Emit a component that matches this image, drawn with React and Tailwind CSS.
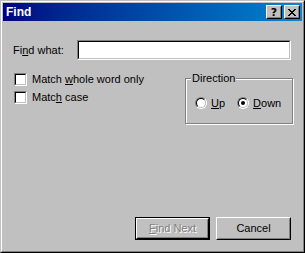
import React from "react";

function Sunken({ className = "", children }) {
  return (
    <div className={"border border-t-[#808080] border-l-[#808080] border-r-white border-b-white " + className}>
      <div className="w-full h-full border border-t-black border-l-black border-r-[#c0c0c0] border-b-[#c0c0c0] bg-white">
        {children}
      </div>
    </div>
  );
}

function Checkbox({ children }) {
  return (
    <div className="flex items-center h-[13px]">
      <Sunken className="w-[13px] h-[13px] ml-px shrink-0" />
      <span className="ml-[5px] leading-[13px]">{children}</span>
    </div>
  );
}

function Radio({ checked, children }) {
  return (
    <div className="flex items-center h-[12px]">
      <div className="w-[12px] h-[12px] rounded-full border border-t-[#808080] border-l-[#808080] border-r-white border-b-white shrink-0">
        <div className="w-full h-full rounded-full border border-t-black border-l-black border-r-[#c0c0c0] border-b-[#c0c0c0] bg-white flex items-center justify-center">
          {checked && <div className="w-[4px] h-[4px] rounded-full bg-black" />}
        </div>
      </div>
      <span className="ml-[4px] leading-[12px]">{children}</span>
    </div>
  );
}

function TitleButton({ children }) {
  return (
    <div className="w-[16px] h-[14px] border border-t-white border-l-white border-r-black border-b-black bg-[#c0c0c0]">
      <div className="w-full h-full border border-t-[#c0c0c0] border-l-[#c0c0c0] border-r-[#808080] border-b-[#808080] flex items-center justify-center">
        {children}
      </div>
    </div>
  );
}

export default function App() {
  return (
    <div className="w-[305px] h-[253px] bg-[#c0c0c0] border border-t-[#c0c0c0] border-l-[#c0c0c0] border-r-black border-b-black font-['Liberation_Sans',Arial,sans-serif] text-[11px] text-black select-none">
      <div className="w-full h-full border border-t-white border-l-white border-r-[#808080] border-b-[#808080] p-px flex flex-col">
        {/* Title bar */}
        <div className="h-[18px] bg-linear-to-r from-[#000080] to-[#1084d0] flex items-center pl-[3px] pr-[2px] shrink-0">
          <span className="text-white font-bold text-[12px] leading-none">Find</span>
          <div className="ml-auto flex gap-[2px]">
            <TitleButton>
              <span className="font-bold text-[11px] leading-none text-black font-['DejaVu_Sans',sans-serif]">?</span>
            </TitleButton>
            <TitleButton>
              <svg width="8" height="7" viewBox="0 0 8 7" shapeRendering="crispEdges">
                <path
                  fill="#000"
                  d="M0 0h2v1H0zM6 0h2v1H6zM1 1h2v1H1zM5 1h2v1H5zM2 2h4v1H2zM3 3h2v1H3zM2 4h4v1H2zM1 5h2v1H1zM5 5h2v1H5zM0 6h2v1H0zM6 6h2v1H6z"
                />
              </svg>
            </TitleButton>
          </div>
        </div>

        {/* Content */}
        <div className="flex-1 flex flex-col pl-[10px] pr-[11px]">
          <div className="mt-[19px] flex items-center h-[20px]">
            <span className="w-[64px] shrink-0">
              Fi<u>n</u>d what:
            </span>
            <Sunken className="w-[214px] h-[20px]" />
          </div>

          <div className="flex">
            <div className="mt-[13px] flex flex-col gap-[5px]">
              <Checkbox>
                Match <u>w</u>hole word only
              </Checkbox>
              <Checkbox>
                Matc<u>h</u> case
              </Checkbox>
            </div>

            <div className="ml-auto mr-[-2px] mt-[18px] w-[108px] h-[46px] relative border border-[#808080] shadow-[1px_1px_0_#fff,inset_1px_1px_0_#fff]">
              <span className="absolute left-[5px] top-[-8px] bg-[#c0c0c0] px-px leading-[14px]">Direction</span>
              <div className="flex pt-[18px] pl-[9px] gap-[12px]">
                <Radio>
                  <u>U</u>p
                </Radio>
                <Radio checked>
                  <u>D</u>own
                </Radio>
              </div>
            </div>
          </div>

          <div className="mt-auto mb-[10px] flex justify-end gap-[6px]">
            <div className="w-[75px] h-[23px] border border-black">
              <div className="w-full h-full border border-t-white border-l-white border-r-black border-b-black">
                <div className="w-full h-full border border-t-[#c0c0c0] border-l-[#c0c0c0] border-r-[#808080] border-b-[#808080] flex items-center justify-center text-[#808080] [text-shadow:1px_1px_0_#fff]">
                  <span>
                    <u>F</u>ind Next
                  </span>
                </div>
              </div>
            </div>
            <div className="w-[75px] h-[23px] border border-t-white border-l-white border-r-black border-b-black">
              <div className="w-full h-full border border-t-[#c0c0c0] border-l-[#c0c0c0] border-r-[#808080] border-b-[#808080] flex items-center justify-center">
                Cancel
              </div>
            </div>
          </div>
        </div>
      </div>
    </div>
  );
}
